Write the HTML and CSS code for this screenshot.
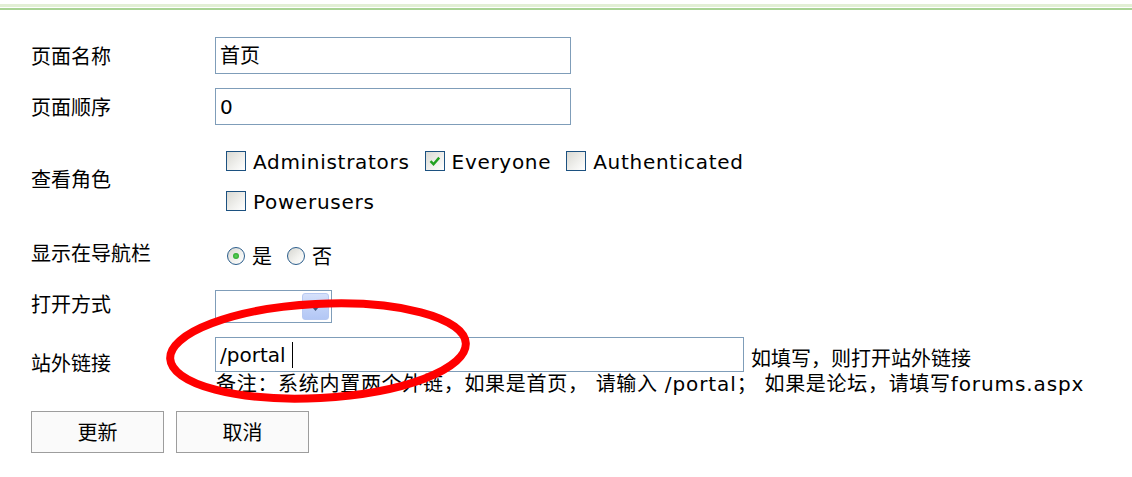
FILE: index.html
```html
<!DOCTYPE html>
<html lang="zh-CN">
<head>
<meta charset="utf-8">
<title>页面设置</title>
<link rel="stylesheet" href="styles.css">
</head>
<body>
<div class="topline-light"></div>
<div class="topline-dark"></div>
<div class="form">
  <div class="row">
    <div class="label">页面名称</div>
    <div class="field"><div class="textbox tb-short"><span class="val">首页</span></div></div>
  </div>
  <div class="row">
    <div class="label">页面顺序</div>
    <div class="field"><div class="textbox tb-short"><span class="val latin-plain">0</span></div></div>
  </div>
  <div class="row row-roles">
    <div class="label">查看角色</div>
    <div class="field">
      <div class="optline">
        <span class="opt"><span class="cb"></span><span class="latin">Administrators</span></span>
        <span class="opt"><span class="cb"><svg class="check" viewBox="0 0 18 18" width="18" height="18"><path d="M4.5 9.2 L7.5 12.2 L13.2 5.6" fill="none" stroke="#21a121" stroke-width="2.4"/></svg></span><span class="latin">Everyone</span></span>
        <span class="opt"><span class="cb"></span><span class="latin">Authenticated</span></span>
      </div>
      <div class="optline">
        <span class="opt"><span class="cb"></span><span class="latin">Powerusers</span></span>
      </div>
    </div>
  </div>
  <div class="row row-nav">
    <div class="label">显示在导航栏</div>
    <div class="field">
      <div class="optline">
        <span class="opt opt-radio"><span class="rb rb-on"><span class="dot"></span></span><span>是</span></span>
        <span class="opt opt-radio"><span class="rb"></span><span>否</span></span>
      </div>
    </div>
  </div>
  <div class="row row-open">
    <div class="label">打开方式</div>
    <div class="field">
      <div class="select"><span class="select-btn"><svg viewBox="0 0 7 4" width="7" height="4"><path d="M0 0 L7 0 L3.5 4 Z" fill="#3f5275"/></svg></span></div>
    </div>
  </div>
  <div class="row row-link">
    <div class="label">站外链接</div>
    <div class="field">
      <div class="linkline">
        <div class="textbox tb-long"><span class="val latin-plain">/portal</span><span class="caret"></span></div>
        <span class="help">如填写，则打开站外链接</span>
      </div>
      <div class="note">备注：系统内置两个外链，如果是首页， 请输入 <span class="latin">/portal</span>； 如果是论坛，请填写<span class="latin">forums.aspx</span></div>
    </div>
  </div>
  <div class="buttons">
    <span class="btn">更新</span>
    <span class="btn">取消</span>
  </div>
</div>
<svg class="mark" width="1132" height="477" viewBox="0 0 1132 477">
  <ellipse cx="318" cy="351" rx="148" ry="47" fill="none" stroke="#ff0000" stroke-width="8" transform="rotate(-3 318 351)"/>
</svg>
</body>
</html>
```
FILE: styles.css
```css
html, body {
  margin: 0;
  padding: 0;
  background: #ffffff;
}
body {
  position: relative;
  width: 1132px;
  height: 477px;
  overflow: hidden;
  font-family: "DejaVu Sans", "Noto Sans CJK SC", sans-serif;
  font-size: 20px;
  color: #000;
  line-height: 1;
}
.topline-light {
  margin-top: 4px;
  height: 3px;
  background: #e2efd5;
}
.topline-dark {
  margin-top: 1px;
  height: 2px;
  background: #a9d394;
}
.form {
  padding: 27px 0 0 31px;
}
.row {
  display: flex;
  align-items: center;
  margin-bottom: 14px;
}
.label {
  width: 184px;
  flex: none;
  font-family: "Noto Sans CJK SC", sans-serif;
  line-height: 22px;
}
.field {
  display: flex;
  flex-direction: column;
}
.textbox {
  box-sizing: border-box;
  height: 37px;
  border: 1px solid #7f9db9;
  padding-left: 4px;
  display: flex;
  align-items: center;
  background: #fff;
}
.tb-short { width: 356px; }
.tb-long { width: 529px; height: 35px; }
.val { line-height: 24px; }
.latin {
  font-family: "DejaVu Sans", sans-serif;
  letter-spacing: 0.7px;
}
.latin-plain {
  font-family: "DejaVu Sans", sans-serif;
}
.caret {
  width: 1px;
  height: 26px;
  background: #000;
  margin-left: 6px;
}
.row-roles { padding-top: 2px; margin-bottom: 15px; }
.row-roles .label { padding-bottom: 4px; }
.row-roles .optline { padding-top: 2px; }
.optline {
  box-sizing: border-box;
  display: flex;
  align-items: center;
  height: 40px;
  padding-left: 11px;
}
.opt {
  display: flex;
  align-items: center;
  margin-right: 15px;
}
.cb {
  box-sizing: border-box;
  width: 20px;
  height: 20px;
  border: 1px solid #1c5180;
  background: linear-gradient(135deg, #d9d9d3 0%, #f1f1ee 60%, #ffffff 100%);
  margin-right: 7px;
  margin-bottom: 3px;
  display: flex;
  align-items: center;
  justify-content: center;
}
.check { display: block; }
.row-nav .label { padding-bottom: 6px; }
.opt-radio { margin-right: 14px; }
.opt-radio span:last-child {
  font-family: "Noto Sans CJK SC", sans-serif;
}
.rb {
  box-sizing: border-box;
  width: 18px;
  height: 18px;
  border-radius: 50%;
  border: 1px solid #2b5d8c;
  background: linear-gradient(135deg, #d6d6d0 0%, #f3f3f0 60%, #ffffff 100%);
  margin-left: 1px;
  margin-right: 7px;
  display: flex;
  align-items: center;
  justify-content: center;
}
.dot {
  width: 6px;
  height: 6px;
  border-radius: 50%;
  background: radial-gradient(circle, #5ed35e 0%, #1d9a1d 100%);
}
.row-open .label { padding-bottom: 5px; }
.select {
  box-sizing: border-box;
  width: 117px;
  height: 33px;
  border: 1px solid #7f9db9;
  padding: 2px;
  display: flex;
  justify-content: flex-end;
  background: #fff;
}
.select-btn {
  box-sizing: border-box;
  width: 27px;
  height: 100%;
  border: 1px solid #b7c9f2;
  border-radius: 3px;
  background: linear-gradient(180deg, #d6e1fb 0%, #c1d2f8 50%, #b3c7f5 100%);
  display: flex;
  align-items: center;
  justify-content: center;
  padding-top: 5px;
}
.select-btn svg { display: block; }
.row-link .label { padding-bottom: 8px; }
.linkline {
  display: flex;
  align-items: center;
}
.help {
  margin-left: 7px;
  margin-top: 6px;
  font-family: "Noto Sans CJK SC", sans-serif;
  line-height: 22px;
}
.note {
  margin-left: 1px;
  height: 25px;
  line-height: 25px;
  white-space: nowrap;
  letter-spacing: 0.7px;
  font-family: "DejaVu Sans", "Noto Sans CJK SC", sans-serif;
}
.note .latin { letter-spacing: 0.9px; }
.buttons {
  display: flex;
  gap: 12px;
}
.btn {
  box-sizing: border-box;
  width: 133px;
  height: 42px;
  border: 1px solid #9d9d9d;
  background: #fafafa;
  display: flex;
  align-items: center;
  justify-content: center;
  font-family: "Noto Sans CJK SC", sans-serif;
}
.mark {
  position: absolute;
  left: 0;
  top: 0;
  pointer-events: none;
}
```
